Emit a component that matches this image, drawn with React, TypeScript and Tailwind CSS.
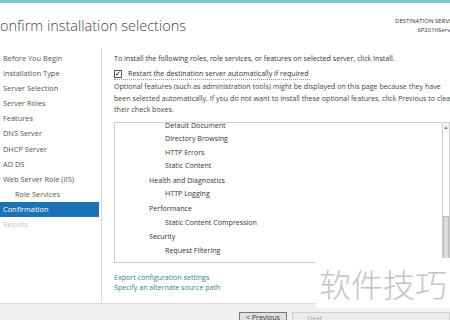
import React from "react";

const navItems = [
  "Before You Begin",
  "Installation Type",
  "Server Selection",
  "Server Roles",
  "Features",
  "DNS Server",
  "DHCP Server",
  "AD DS",
  "Web Server Role (IIS)",
];

const features: { label: string; level: number }[] = [
  { label: "Default Document", level: 2 },
  { label: "Directory Browsing", level: 2 },
  { label: "HTTP Errors", level: 2 },
  { label: "Static Content", level: 2 },
  { label: "Health and Diagnostics", level: 1 },
  { label: "HTTP Logging", level: 2 },
  { label: "Performance", level: 1 },
  { label: "Static Content Compression", level: 2 },
  { label: "Security", level: 1 },
  { label: "Request Filtering", level: 2 },
];

const App = () => {
  return (
    <div className="relative w-[450px] h-[320px] overflow-hidden bg-white text-[#333] font-['Open_Sans',sans-serif]">
      <div className="h-[3px] bg-[#7fc4cf]" />

      {/* header */}
      <div className="flex h-[45px] justify-between">
        <h1 className="ml-[-9px] mt-[11px] whitespace-nowrap text-[14.5px] font-light leading-[24px] text-[#444]">
          Confirm installation selections
        </h1>
        <div className="mt-[14px] mr-[-6px] flex flex-col items-end whitespace-nowrap text-[6px] leading-[9px] text-[#333]">
          <span>DESTINATION SERVER</span>
          <span>SP2016Server</span>
        </div>
      </div>

      {/* body */}
      <div className="flex h-[255px]">
        <nav className="flex w-[102px] shrink-0 flex-col border-r border-[#d9d9d9] pt-[3px] text-[7.4px] text-[#555]">
          {navItems.map((n) => (
            <div key={n} className="h-[15.1px] whitespace-nowrap pl-[3px] leading-[15px]">
              {n}
            </div>
          ))}
          <div className="h-[15.1px] pl-[15px] leading-[15px]">Role Services</div>
          <div className="mr-[2px] h-[15px] bg-[#1a72b5] pl-[3px] leading-[15px] text-white">Confirmation</div>
          <div className="h-[15px] pl-[3px] leading-[15px] text-[#c4c4c4]">Results</div>
        </nav>

        <div className="flex min-w-0 flex-1 flex-col pl-[12px] pt-[3px] text-[7.1px] text-[#333]">
          <p className="whitespace-nowrap leading-[14px]">
            To install the following roles, role services, or features on selected server, click Install.
          </p>
          <label className="mt-[3px] flex w-fit items-center gap-[6px] whitespace-nowrap border-b border-dotted border-[#999] pr-[1px] leading-[11px]">
            <span className="flex h-[8px] w-[8px] items-center justify-center border border-[#555] text-[7px] leading-none text-black">
              ✓
            </span>
            Restart the destination server automatically if required
          </label>
          <p className="mt-[1px] flex flex-col whitespace-nowrap leading-[11.5px] text-[#444]">
            <span>Optional features (such as administration tools) might be displayed on this page because they have</span>
            <span>been selected automatically. If you do not want to install these optional features, click Previous to clear</span>
            <span>their check boxes.</span>
          </p>

          <div className="mt-[6px] flex h-[141px] w-[336px] shrink-0 border border-[#cfcfcf]">
            <div className="flex-1 overflow-hidden">
              <div className="mt-[-4px] flex flex-col text-[7.1px] text-[#333]">
                {features.map((f) => (
                  <div
                    key={f.label}
                    className={
                      f.level === 1
                        ? "mt-[1px] pl-[34px] leading-[13.6px]"
                        : "pl-[50px] leading-[13.6px]"
                    }
                  >
                    {f.label}
                  </div>
                ))}
              </div>
            </div>
            <div className="flex w-[7px] flex-col border-l border-[#cfcfcf] bg-[#f4f4f4]">
              <div className="h-[8px] text-center text-[5px] leading-[8px] text-[#777]">▲</div>
              <div className="flex-1 bg-white" />
              <div className="h-[46px] border border-[#bbb] bg-[#dcdcdc]" />
            </div>
          </div>

          <div className="mt-[9px] flex flex-col text-[7.1px] leading-[10.5px] text-[#3a7f8f]">
            <span>Export configuration settings</span>
            <span>Specify an alternate source path</span>
          </div>
        </div>
      </div>

      {/* footer */}
      <div className="absolute left-0 top-[303px] flex h-[17px] w-full items-start justify-end gap-[5px] border-t border-[#dcdcdc] bg-[#f0f0f0] pt-[8px]">
        <div className="flex h-[12px] w-[48px] items-center justify-center border border-[#7a7a7a] bg-[#e1e1e1] text-[7px] text-[#333]">
          &lt; Previous
        </div>
        <div className="h-[12px] w-[158px] border border-[#cfcfcf] bg-[#ececec] pl-[14px] text-[7px] leading-[11px] text-[#aaa]">
          Next
        </div>
      </div>

      {/* watermark */}
      <div className="absolute left-[316px] top-[258px] flex h-[50px] w-[134px] items-center justify-center whitespace-nowrap bg-white font-['Noto_Sans_CJK_SC',sans-serif] text-[32px] font-light tracking-[0px] text-[#c4c4c4]">
        软件技巧
      </div>
    </div>
  );
};

export default App;
